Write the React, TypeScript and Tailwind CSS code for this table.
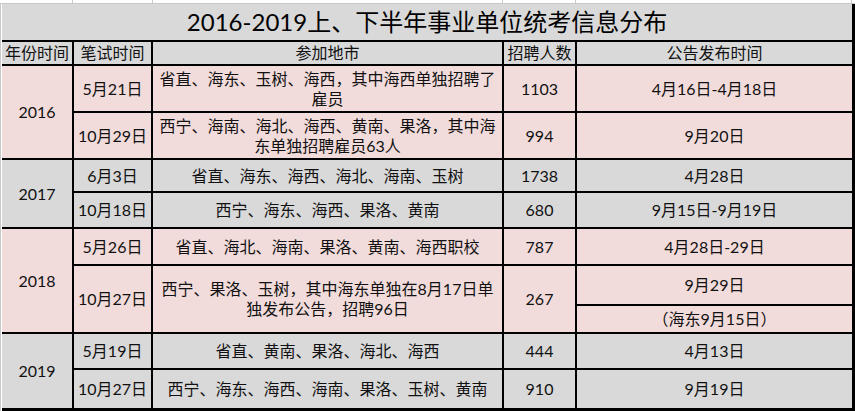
import React from "react";

const PINK = "bg-[#f2dcdb]";
const GRAY = "bg-[#d9d9d9]";

const Cell: React.FC<{ bg: string; className?: string; children?: React.ReactNode }> = ({
  bg,
  className = "",
  children,
}) => (
  <div className={`${bg} flex items-center justify-center text-center text-[16px] leading-[20px] text-[#111] ${className}`}>
    {children}
  </div>
);

type Row = { date: string; places: React.ReactNode; count: string; notice: string };

const YearBlock: React.FC<{ year: string; bg: string; rows: Row[] }> = ({ year, bg, rows }) => (
  <>
    <Cell bg={bg} className={rows.length === 2 ? "row-span-2" : ""}>
      {year}
    </Cell>
    {rows.map((r) => (
      <React.Fragment key={r.date + r.notice}>
        <Cell bg={bg}>{r.date}</Cell>
        <Cell bg={bg}>{r.places}</Cell>
        <Cell bg={bg}>{r.count}</Cell>
        <Cell bg={bg}>{r.notice}</Cell>
      </React.Fragment>
    ))}
  </>
);

export default function App() {
  return (
    <div
      className="w-[855px] h-[411px] bg-white overflow-hidden"
      style={{ fontFamily: 'Lato, "Noto Sans CJK SC", sans-serif' }}
    >
      {/* spreadsheet gridlines above the table */}
      <div className="h-[4px] flex border-b border-[#c8c8c8]">
        <div className="w-[73px] border-r border-[#c8c8c8]" />
        <div className="w-[80px] border-r border-[#c8c8c8]" />
        <div className="w-[350px] border-r border-[#c8c8c8]" />
        <div className="w-[73px] border-r border-[#c8c8c8]" />
        <div className="w-[276px] border-r border-[#c8c8c8]" />
      </div>

      <div className="flex">
        <div className="w-[2px] h-[407px] border-l border-[#c8c8c8] bg-white" />
        <div className="grid grid-cols-[70px_77px_349px_71px_275px] grid-rows-[36px_22px_45px_45px_31px_34px_35px_38px_26px_34px_38px] gap-[2px] bg-black pr-[3px] pb-[3px]">
          <div className={`${GRAY} col-span-5 flex items-center justify-center text-[24px] text-black`}>
            2016-2019上、下半年事业单位统考信息分布
          </div>

          <Cell bg={GRAY}>年份时间</Cell>
          <Cell bg={GRAY}>笔试时间</Cell>
          <Cell bg={GRAY}>参加地市</Cell>
          <Cell bg={GRAY}>招聘人数</Cell>
          <Cell bg={GRAY}>公告发布时间</Cell>

          <YearBlock
            year="2016"
            bg={PINK}
            rows={[
              {
                date: "5月21日",
                places: (
                  <span>
                    省直、海东、玉树、海西，其中海西单独招聘了
                    <br />
                    雇员
                  </span>
                ),
                count: "1103",
                notice: "4月16日-4月18日",
              },
              {
                date: "10月29日",
                places: (
                  <span>
                    西宁、海南、海北、海西、黄南、果洛，其中海
                    <br />
                    东单独招聘雇员63人
                  </span>
                ),
                count: "994",
                notice: "9月20日",
              },
            ]}
          />

          <YearBlock
            year="2017"
            bg={GRAY}
            rows={[
              { date: "6月3日", places: "省直、海东、海西、海北、海南、玉树", count: "1738", notice: "4月28日" },
              { date: "10月18日", places: "西宁、海东、海西、果洛、黄南", count: "680", notice: "9月15日-9月19日" },
            ]}
          />

          {/* 2018: second exam has two notice lines */}
          <Cell bg={PINK} className="row-span-3">
            2018
          </Cell>
          <Cell bg={PINK}>5月26日</Cell>
          <Cell bg={PINK}>省直、海北、海南、果洛、黄南、海西职校</Cell>
          <Cell bg={PINK}>787</Cell>
          <Cell bg={PINK}>4月28日-29日</Cell>
          <Cell bg={PINK} className="row-span-2">
            10月27日
          </Cell>
          <Cell bg={PINK} className="row-span-2">
            <span>
              西宁、果洛、玉树，其中海东单独在8月17日单
              <br />
              独发布公告，招聘96日
            </span>
          </Cell>
          <Cell bg={PINK} className="row-span-2">
            267
          </Cell>
          <Cell bg={PINK}>9月29日</Cell>
          <Cell bg={PINK}>（海东9月15日）</Cell>

          <YearBlock
            year="2019"
            bg={GRAY}
            rows={[
              { date: "5月19日", places: "省直、黄南、果洛、海北、海西", count: "444", notice: "4月13日" },
              { date: "10月27日", places: "西宁、海东、海西、海南、果洛、玉树、黄南", count: "910", notice: "9月19日" },
            ]}
          />
        </div>
      </div>
    </div>
  );
}
